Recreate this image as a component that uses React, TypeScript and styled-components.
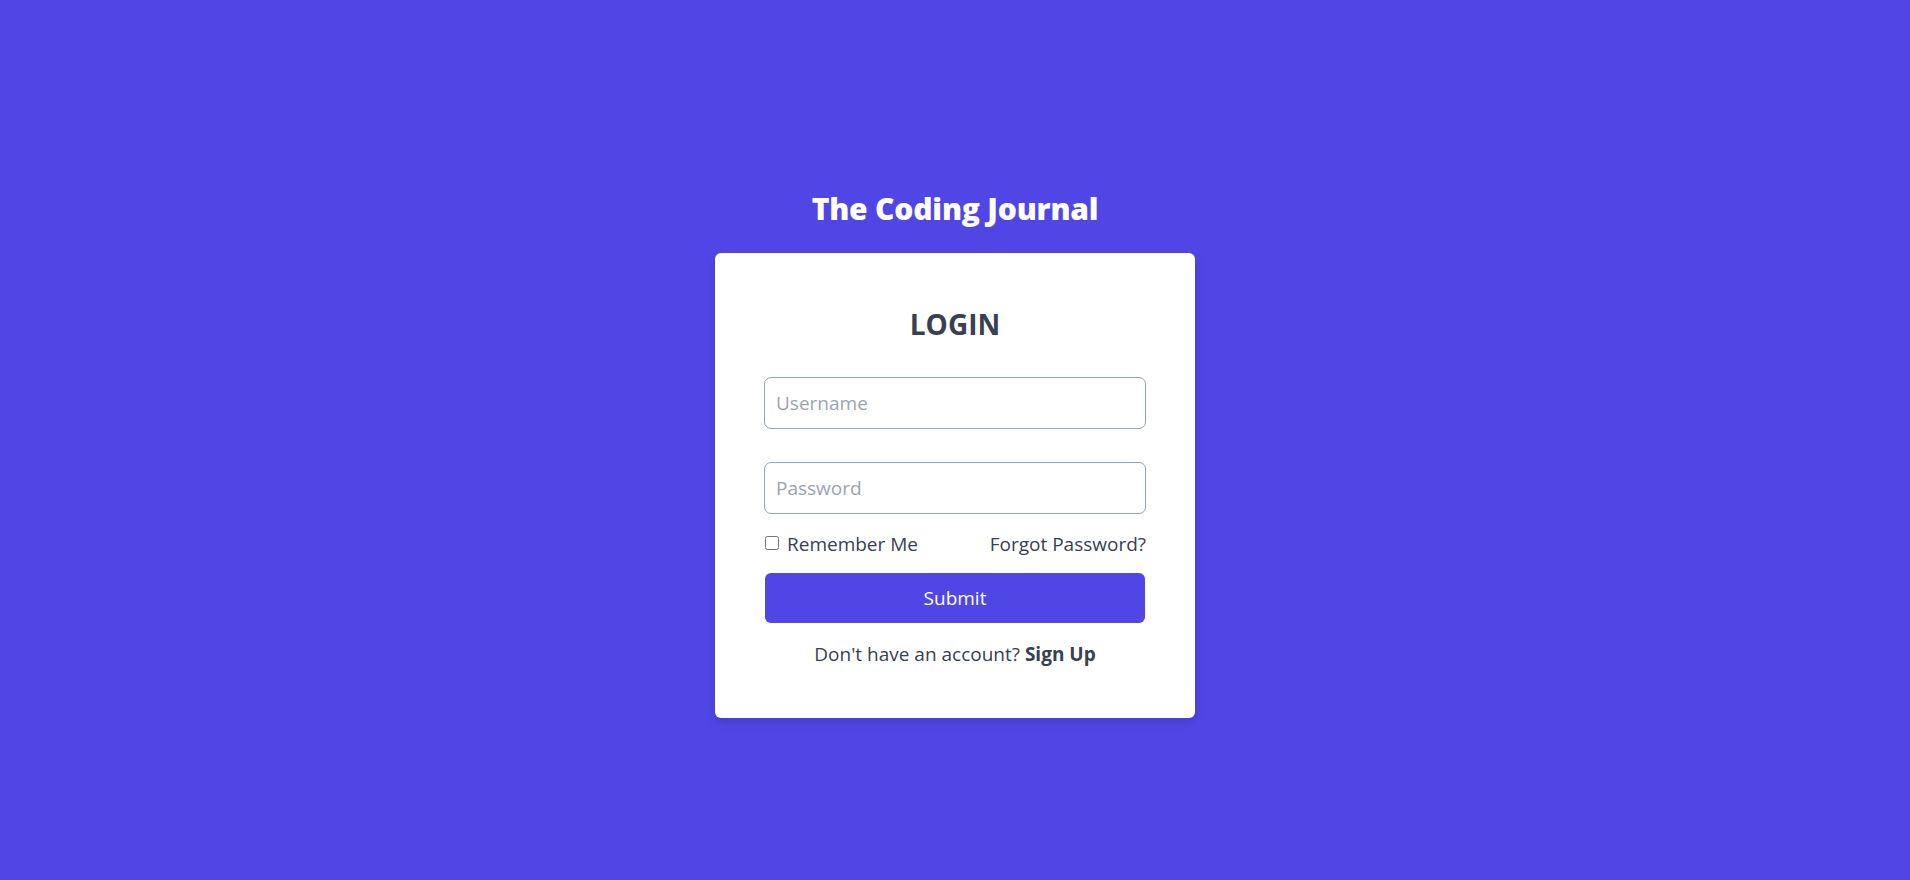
import React from "react";
import styled, { createGlobalStyle } from "styled-components";

const GlobalStyle = createGlobalStyle`
  html, body {
    margin: 0;
    padding: 0;
  }
  body {
    background: #4f46e5;
    font-family: "Open Sans", "Noto Sans", "Liberation Sans", sans-serif;
    color: #374151;
  }
`;

const Page = styled.main`
  min-height: 100vh;
  display: flex;
  flex-direction: column;
  align-items: center;
  justify-content: center;
  box-sizing: border-box;
  padding-top: 28px;
`;

const Brand = styled.h1`
  margin: 0 0 26px;
  color: #ffffff;
  font-size: 30px;
  line-height: 36px;
  font-weight: 800;
  letter-spacing: -0.2px;
`;

const Card = styled.section`
  width: 480px;
  box-sizing: border-box;
  padding: 53px 49px 50px;
  background: #ffffff;
  border-radius: 6px;
  box-shadow: 0 4px 10px rgba(0, 0, 0, 0.12);
`;

const Heading = styled.h2`
  margin: 0 0 35px;
  text-align: center;
  font-size: 28px;
  line-height: 36px;
  font-weight: 700;
  color: #374151;
`;

const Form = styled.form`
  display: flex;
  flex-direction: column;
`;

const Input = styled.input<{ $last?: boolean }>`
  box-sizing: border-box;
  width: 100%;
  height: 52px;
  margin: 0 0 ${(p) => (p.$last ? "16px" : "33px")};
  padding: 0 11px;
  border: 1px solid #94a3b8;
  border-radius: 7px;
  font-family: inherit;
  font-size: 19px;
  color: #374151;
  outline: none;

  &::placeholder {
    color: #9ca3af;
  }
`;

const OptionsRow = styled.div`
  display: flex;
  justify-content: space-between;
  align-items: center;
  font-size: 19px;
  line-height: 28px;
  margin-bottom: 15px;
`;

const CheckLabel = styled.label`
  display: flex;
  align-items: center;
  gap: 8px;
  cursor: pointer;

  input {
    width: 14px;
    height: 14px;
    margin: 0 0 1px 1px;
  }
`;

const TextLink = styled.a`
  color: #374151;
  text-decoration: none;
`;

const SubmitButton = styled.button`
  height: 50px;
  margin: 0 1px 17px;
  border: none;
  border-radius: 6px;
  background: #4f46e5;
  color: #ffffff;
  font-family: inherit;
  font-size: 19px;
  cursor: pointer;
`;

const Footer = styled.p`
  margin: 0;
  text-align: center;
  font-size: 19px;
  line-height: 28px;

  strong {
    font-weight: 700;
  }
`;

export default function App() {
  return (
    <>
      <GlobalStyle />
      <Page>
        <Brand>The Coding Journal</Brand>
        <Card>
          <Heading>LOGIN</Heading>
          <Form onSubmit={(e) => e.preventDefault()}>
            <Input type="text" placeholder="Username" />
            <Input type="password" placeholder="Password" $last />
            <OptionsRow>
              <CheckLabel>
                <input type="checkbox" />
                Remember Me
              </CheckLabel>
              <TextLink href="#">Forgot Password?</TextLink>
            </OptionsRow>
            <SubmitButton type="submit">Submit</SubmitButton>
            <Footer>
              Don't have an account? <strong>Sign Up</strong>
            </Footer>
          </Form>
        </Card>
      </Page>
    </>
  );
}
